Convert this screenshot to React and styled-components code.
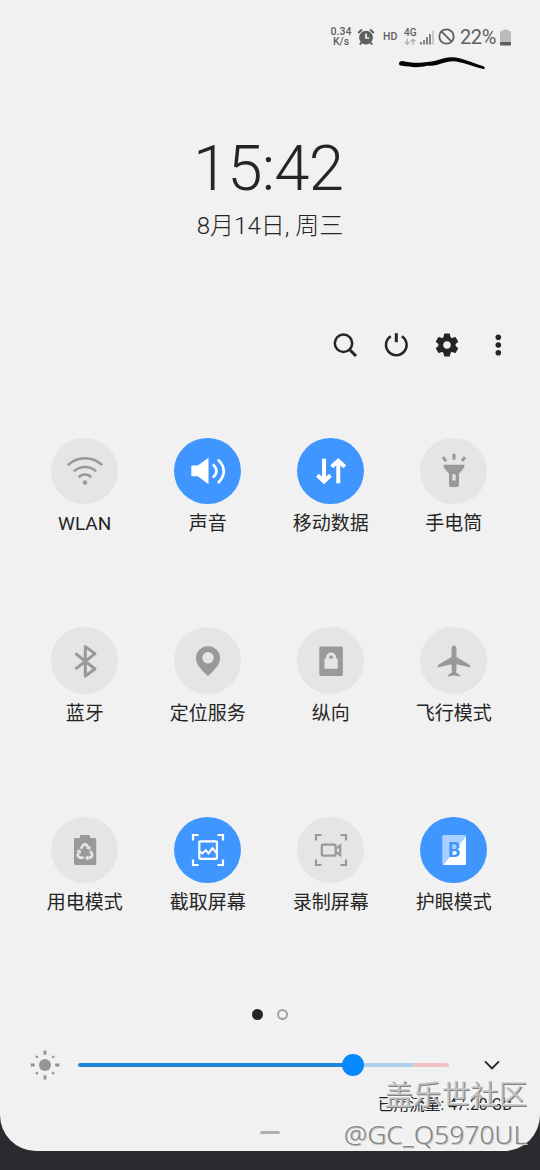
import React from 'react'
import styled, { createGlobalStyle } from 'styled-components'


const tiles = [
    { label: 'WLAN', icon: 'wifi' },
    { label: '声音', icon: 'sound', on: true },
    { label: '移动数据', icon: 'data', on: true },
    { label: '手电筒', icon: 'torch' },
    { label: '蓝牙', icon: 'bluetooth' },
    { label: '定位服务', icon: 'location' },
    { label: '纵向', icon: 'portrait' },
    { label: '飞行模式', icon: 'plane' },
    { label: '用电模式', icon: 'battery' },
    { label: '截取屏幕', icon: 'capture', on: true },
    { label: '录制屏幕', icon: 'record' },
    { label: '护眼模式', icon: 'bluelight', on: true },
]

const corners = 'M-15 -9.5V-15H-9.5M9.5 -15H15V-9.5M15 9.5V15H9.5M-9.5 15H-15V9.5'

// every glyph is drawn around 0,0, the middle of its circle
const glyphs = {
    wifi: (
        <g fill="none" stroke="currentColor" strokeWidth="2.5">
            <path d="M-17.2 -5.8A24.6 24.6 0 0 1 17.2 -5.8M-11.2 .4A16.2 16.2 0 0 1 11.2 .4M-6.3 6.3A8.7 8.7 0 0 1 6.3 6.3" />
            <circle cy="11.5" r="2.3" fill="currentColor" stroke="none" />
        </g>
    ),
    sound: (
        <g fill="none" stroke="currentColor" strokeWidth="2.6">
            <path d="M-15.7 -5.5H-10.2L.5 -13.2V13.2L-10.2 5.2H-15.7Q-16.7 5.2 -16.7 4.2V-4.5Q-16.7 -5.5 -15.7 -5.5z" fill="currentColor" stroke="none" />
            <path d="M4.8 -6.6Q12.2 0 4.8 6.6M10 -11.4Q21.6 0 10 12" />
        </g>
    ),
    data: (
        <path d="M-7 -12.2V10M-13.6 4.2L-7 10.4L-.6 4.2M7.3 12.2V-9.5M.7 -4.2L7.3 -10.2L13.8 -4.2" fill="none" stroke="currentColor" strokeWidth="4" />
    ),
    torch: (
        <g fill="currentColor">
            <path fillRule="evenodd" d="M-10.3 -6.3H10.3V-3.5L5 2.8V14Q5 16 3 16H-3Q-5 16 -5 14V2.8L-10.3 -3.5zM-1.6 3.2V9.5H1.6V3.2z" />
            <path d="M0 -17.2V-11.2M-11 -13.8L-8 -9.8M11 -13.8L8 -9.8" fill="none" stroke="currentColor" strokeWidth="3" />
        </g>
    ),
    bluetooth: (
        <path d="M-9.6 -7.6L10 8L.3 15V-14.4L10 -7.4L-9.6 8.2" fill="none" stroke="currentColor" strokeWidth="3" strokeLinejoin="round" />
    ),
    location: (
        <path fillRule="evenodd" fill="currentColor" d="M0 15.3C-2 12.5 -12.1 5.5 -12.1 -3A12.1 11.8 0 0 1 12.1 -3C12.1 5.5 2 12.5 0 15.3zM0 -9A5.7 5.7 0 1 0 0 2.4A5.7 5.7 0 1 0 0 -9z" />
    ),
    portrait: (
        <g>
            <rect x="-11.7" y="-14.5" width="23.6" height="29.4" rx="1.6" fill="currentColor" />
            <rect x="-6.6" y="-2.4" width="13.4" height="10.2" rx="1" fill="#e5e5e5" />
            <path d="M-3.4 -1.5V-3.4A3.5 3.5 0 0 1 3.6 -3.4V-1.5" fill="none" stroke="#e5e5e5" strokeWidth="3" />
        </g>
    ),
    plane: (
        <path fill="currentColor" d="M0 -15.6C1.6 -15.6 2.5 -13.8 2.5 -11.5V-4L14.8 3.3Q16.4 4.3 16.4 6.6L2.5 3.2V5Q2.5 9 2 11.2L5.2 13.4Q6.4 14.2 6.4 15.6L0 14.4L-6.4 15.6Q-6.4 14.2 -5.2 13.4L-2 11.2Q-2.5 9 -2.5 5V3.2L-16.4 6.6Q-16.4 4.3 -14.8 3.3L-2.5 -4V-11.5C-2.5 -13.8 -1.6 -15.6 0 -15.6z" />
    ),
    battery: (
        <g>
            <path fill="currentColor" d="M-5 -12V-14Q-5 -15 -4 -15H4Q5 -15 5 -14V-12H9.8Q11.2 -12 11.2 -10.6V13.5Q11.2 15 9.8 15H-9.6Q-11 15 -11 13.5V-10.6Q-11 -12 -9.6 -12z" />
            {/* one arrow of the recycling sign, turned three times */}
            {[0, 120, 240].map(angle => (
                <g key={angle} transform={`translate(0 2.4) rotate(${angle})`}>
                    <path d="M-4 -3.8L-2 -7Q0 -9 2 -7L2.8 -5.6" fill="none" stroke="#e5e5e5" strokeWidth="2.6" />
                    <path d="M.8 -4.2L5.4 -7L5.2 -2.4z" fill="#e5e5e5" />
                </g>
            ))}
        </g>
    ),
    capture: (
        <g fill="none" stroke="currentColor" strokeWidth="2.2">
            <path d={corners} />
            <rect x="-8.7" y="-8.6" width="17.6" height="17.4" rx="1" />
            <path d="M-8 1.6L-5.6 3.4L-2.2 .1L.6 3.4L4.4 -1.8L8.6 2.8" strokeWidth="2" />
        </g>
    ),
    record: (
        <g fill="none" stroke="currentColor" strokeWidth="2.2">
            <path d={corners} />
            <rect x="-9.2" y="-5.4" width="13.8" height="11" rx="1.2" />
            <path d="M5 -1.4L9.2 -4.6V5L5 1.8" strokeWidth="2.2" />
        </g>
    ),
    bluelight: (
        <g>
            <rect x="-11.7" y="-15" width="23.6" height="30" rx="1.6" fill="#a9d0ff" />
            <path d="M11.9 -13.5V13.4Q11.9 15 10.3 15H-10.5z" fill="#fff" />
            <text x="0.2" y="6.6" textAnchor="middle" fontSize="19.5" fontWeight="700" fill="#4096ff">B</text>
        </g>
    ),
}

const Tile = ({ tile }) => {
    const { label, icon, on } = tile

    return (
        <TileBox>
            <Circle $on={on}>
                <svg width="40" height="40" viewBox="-20 -20 40 40">{glyphs[icon]}</svg>
            </Circle>
            <Label>{label}</Label>
        </TileBox>
    )
}

const StatusBar = () => (
    <Status>
        <Speed>
            <span>0.34</span>
            <span>K/s</span>
        </Speed>
        <svg width="18" height="18" viewBox="0 0 18 18">
            <circle cx="9" cy="9.6" r="6.9" fill="#5f5f5f" />
            <path d="M1.2 5L5 1.4M16.8 5L13 1.4M4.4 14.5L2.8 16.6M13.6 14.5L15.2 16.6" stroke="#5f5f5f" strokeWidth="2" />
            <path d="M9 5.6V10H12.2" fill="none" stroke="#f1f1f1" strokeWidth="1.7" />
        </svg>
        <Hd>HD</Hd>
        <Network>
            4G
            <svg width="12" height="8" viewBox="0 0 12 8">
                <path d="M3.2 .5V6M.8 4L3.2 6.4L5.6 4M9 7V1.5M6.6 3.6L9 1.2L11.4 3.6" fill="none" stroke="#b0b0b0" strokeWidth="1.3" />
            </svg>
        </Network>
        <Signal width="14" height="15" viewBox="0 0 14 15">
            <path d="M1 14.5V12M4 14.5V10M7 14.5V7M10 14.5V4" stroke="#5f5f5f" strokeWidth="1.5" />
            <path d="M13 14.5V.5" stroke="#c2c2c2" strokeWidth="1.7" />
        </Signal>
        <NoSign width="17" height="17" viewBox="0 0 17 17">
            <g fill="none" stroke="#5f5f5f" strokeWidth="1.8">
                <circle cx="8.5" cy="8.5" r="7.2" />
                <path d="M3.4 3.4L13.6 13.6" />
            </g>
        </NoSign>
        <Percent>22%</Percent>
        <svg width="11" height="17" viewBox="0 0 11 17">
            <path d="M3 2V.5H8V2H10Q11 2 11 3V13.5H0V3Q0 2 1 2z" fill="#bcbcbc" />
            <path d="M0 13H11V15.5Q11 16.5 10 16.5H1Q0 16.5 0 15.5z" fill="#5f5f5f" />
        </svg>
        <Scribble width="90" height="16" viewBox="0 0 90 16">
            <path d="M1 8.6Q1 6 4.4 6C11 7.6 19 8.6 27 7.2C40 6.6 44 2 54 2.2C64 2.4 73 7.6 85.4 11.2Q87.6 12.4 86.6 13.4Q85.6 14.4 83.6 13.6C72 10.6 64 6.6 55 6.2C46 6.2 41 11 29 10.8C19 13.4 12 11.6 4 10.8Q1 10.8 1 8.6z" fill="#050505" />
        </Scribble>
    </Status>
)

const Toolbar = () => (
    <Tools>
        <svg width="26" height="26" viewBox="-13 -13 26 26">
            <path d="M5 5L11 11" stroke="#252525" strokeWidth="3" />
            <circle cx="-1.5" cy="-1.8" r="8.7" fill="none" stroke="#252525" strokeWidth="2.5" />
        </svg>
        <svg width="26" height="26" viewBox="-13 -13 26 26">
            <path d="M-5.2 -8.8A10.3 10.3 0 1 0 5.8 -8.8" fill="none" stroke="#252525" strokeWidth="2.5" />
            <path d="M.3 -11.8V-2.8" stroke="#252525" strokeWidth="3" />
        </svg>
        <svg width="26" height="26" viewBox="-13 -13 26 26">
            {[0, 60, 120, 180, 240, 300].map(angle => (
                <path key={angle} d="M-3.8 -6.5L-2.9 -11Q-2.8 -11.4 -2.3 -11.4H2.3Q2.8 -11.4 2.9 -11L3.8 -6.5z" fill="#252525" transform={`rotate(${angle})`} />
            ))}
            <circle r="6.2" fill="none" stroke="#252525" strokeWidth="4.8" />
        </svg>
        <svg width="26" height="26" viewBox="-13 -13 26 26" fill="#252525">
            <circle cx="0.3" cy="-7.8" r="2.8" />
            <circle cx="0.3" cy="0" r="2.8" />
            <circle cx="0.3" cy="7.8" r="2.8" />
        </svg>
    </Tools>
)

const App = () => {
    return (
        <Screen>
            <GlobalStyle />
            <Panel>
                <StatusBar />
                <Clock>15:42</Clock>
                <DateText>8月14日, 周三</DateText>
                <Toolbar />
                <Grid>
                    {tiles.map(tile => <Tile key={tile.icon} tile={tile} />)}
                </Grid>
                <Pages>
                    <Dot $active />
                    <Dot />
                </Pages>
                <Brightness>
                    <svg width="30" height="30" viewBox="-15 -15 30 30">
                        <circle r="6" fill="#959595" />
                        <path d="M0 -14.4V-10.2M0 14.4V10.2M-14.4 0H-10.2M14.4 0H10.2" stroke="#959595" strokeWidth="2.8" />
                        <path d="M-9 -9L-7.2 -7.2M9 -9L7.2 -7.2M-9 9L-7.2 7.2M9 9L7.2 7.2" stroke="#959595" strokeWidth="2.2" />
                    </svg>
                    <Track>
                        <Filled />
                        <Thumb />
                        <Rest />
                        <Limit />
                    </Track>
                    <svg width="16" height="10" viewBox="0 0 16 10">
                        <path d="M1 1.3L8 8.3L15 1.3" fill="none" stroke="#252525" strokeWidth="1.9" />
                    </svg>
                </Brightness>
                <Usage>已用流量: 47.20 GB</Usage>
                <Handle />
            </Panel>
            <Watermark>
                <Community>盖乐世社区</Community>
                <UserName>@GC_Q5970UL</UserName>
            </Watermark>
        </Screen>
    )
}

export default App


const GlobalStyle = createGlobalStyle`
body {
  margin: 0;
  background: #2a2b2f;
}
* {
  box-sizing: border-box;
}
svg {
  display: block;
  flex-shrink: 0;
}
`;

const Screen = styled.div`
position: relative;
width: 540px;
height: 1170px;
overflow: hidden;
background: #2a2b2f;
color: #252525;
font-family: Roboto, "Noto Sans CJK SC", sans-serif;
`;

const Panel = styled.div`
display: flex;
flex-direction: column;
height: 1150.5px;
background: #f1f1f1;
border-radius: 0 0 36px 36px;
`;

const Status = styled.div`
position: relative;
display: flex;
align-items: center;
height: 74px;
padding: 0 28px 0 330px;
color: #5f5f5f;
`;

const Speed = styled.div`
display: flex;
flex-direction: column;
align-items: center;
width: 22px;
margin-right: 5px;
font-size: 10.5px;
line-height: 10px;
font-weight: 500;
`;

const Hd = styled.div`
width: 14px;
margin: -2px 7px 0 8px;
font-size: 10.5px;
font-weight: 500;
`;

const Network = styled.div`
display: flex;
flex-direction: column;
gap: 1px;
width: 13px;
margin-right: 3px;
font-size: 10px;
line-height: 9px;
font-weight: 500;
`;

const Signal = styled.svg`
margin-right: 3.5px;
`;

const NoSign = styled.svg`
margin-top: -1px;
`;

const Percent = styled.div`
width: 37px;
margin: 0 2.5px 0 5.5px;
font-size: 20px;
line-height: 24px;
font-weight: 400;
letter-spacing: -0.4px;
`;

const Scribble = styled.svg`
position: absolute;
left: 398px;
top: 55px;
`;

const Clock = styled.div`
height: 76px;
margin-top: 57px;
font-size: 63.5px;
line-height: 76px;
font-weight: 300;
letter-spacing: -0.8px;
text-indent: -4px;
text-align: center;
`;

const DateText = styled.div`
height: 36px;
margin-top: 1px;
font-size: 24px;
line-height: 36px;
font-weight: 300;
text-align: center;
`;

const Tools = styled.div`
display: flex;
justify-content: flex-end;
gap: 25px;
margin-top: 88px;
padding-right: 29px;
`;

const Grid = styled.div`
display: grid;
grid-template-columns: repeat(4, 123px);
grid-auto-rows: 189.5px;
height: 568.5px;
margin: 79.8px 0 0 23.2px;
`;

const TileBox = styled.div`
display: flex;
flex-direction: column;
align-items: center;
`;

const Circle = styled.div`
display: flex;
align-items: center;
justify-content: center;
width: 66.5px;
height: 66.5px;
border-radius: 50%;
background: ${props => props.$on ? '#4096ff' : '#e5e5e5'};
color: ${props => props.$on ? '#fff' : '#999'};
`;

const Label = styled.div`
margin-top: 6px;
font-size: 19px;
line-height: 28px;
white-space: nowrap;
`;

const Pages = styled.div`
display: flex;
justify-content: center;
gap: 14px;
margin-top: 2.7px;
`;

const Dot = styled.div`
width: 11px;
height: 11px;
border-radius: 50%;
border: 2px solid ${props => props.$active ? '#252525' : '#a3a3a3'};
background: ${props => props.$active ? '#252525' : 'transparent'};
`;

const Brightness = styled.div`
display: flex;
align-items: center;
height: 30px;
margin-top: 30px;
padding-left: 29.5px;
`;

const Track = styled.div`
display: flex;
align-items: center;
width: 371.5px;
margin: 0 34.5px 0 18px;
`;

const Filled = styled.div`
width: 266px;
height: 4px;
border-radius: 2px 0 0 2px;
background: #1f86d8;
`;

const Thumb = styled.div`
width: 22.4px;
height: 22.4px;
margin-left: -2px;
border-radius: 50%;
background: #0788ff;
`;

const Rest = styled.div`
width: 49px;
height: 4px;
background: #aed0ee;
`;

const Limit = styled.div`
flex: 1;
height: 4px;
border-radius: 0 2px 2px 0;
background: #f2c1c1;
`;

const Usage = styled.div`
margin-top: 13px;
padding-right: 28px;
font-size: 15.7px;
line-height: 24px;
text-align: right;
`;

const Handle = styled.div`
width: 20px;
height: 3px;
margin: 14px auto 0;
border-radius: 2px;
background: #b0b0b0;
`;

const Watermark = styled.div`
position: absolute;
right: 13px;
bottom: 17px;
display: flex;
flex-direction: column;
align-items: flex-end;
white-space: nowrap;
`;

const Community = styled.div`
font-size: 28.5px;
line-height: 38px;
font-weight: 400;
color: rgba(200, 200, 200, 0.85);
text-shadow: 1px 1px 0 #808080, -1px -1px 0 #f7f7f7;
`;

const UserName = styled.div`
font-family: "Noto Sans", sans-serif;
font-size: 26.4px;
line-height: 38px;
font-weight: 300;
color: #858585;
text-shadow: 1px 1px 0 #c4c4c4, -1px -1px 0 #fafafa;
`;
